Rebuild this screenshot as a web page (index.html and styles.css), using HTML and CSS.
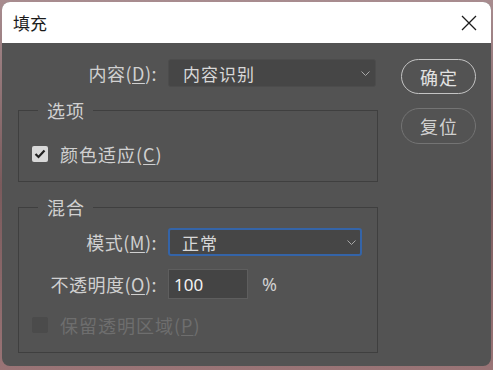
FILE: index.html
```html
<!DOCTYPE html>
<html lang="zh-CN">
<head>
<meta charset="utf-8">
<title>填充</title>
<link rel="stylesheet" href="styles.css">
</head>
<body>
<div class="dialog">
  <div class="titlebar">
    <span class="title">填充</span>
    <button class="close" aria-label="关闭">
      <svg width="16" height="16" viewBox="0 0 16 16"><path d="M1 1 L15 15 M15 1 L1 15" stroke="#1c1c1c" stroke-width="1.3" fill="none"/></svg>
    </button>
  </div>
  <div class="content">
    <div class="main">
      <div class="row top-row">
        <span class="lbl lbl-top">内容(<u>D</u>):</span>
        <div class="select select-wide">
          <span>内容识别</span>
          <svg class="chev" width="9" height="5" viewBox="0 0 9 5"><path d="M0.5 0.5 L4.5 4.5 L8.5 0.5" stroke="#a8a8a8" stroke-width="1" fill="none"/></svg>
        </div>
      </div>
      <fieldset class="group group-options">
        <legend>选项</legend>
        <div class="check-row first-check">
          <span class="checkbox checked">
            <svg width="12" height="10" viewBox="0 0 12 10"><path d="M1.5 5 L4.5 8 L10.5 1.5" stroke="#222" stroke-width="2.2" fill="none"/></svg>
          </span>
          <span class="check-label">颜色适应(<u>C</u>)</span>
        </div>
      </fieldset>
      <fieldset class="group group-blend">
        <legend>混合</legend>
        <div class="row mode-row">
          <span class="lbl">模式(<u>M</u>):</span>
          <div class="select select-mode">
            <span>正常</span>
            <svg class="chev" width="9" height="5" viewBox="0 0 9 5"><path d="M0.5 0.5 L4.5 4.5 L8.5 0.5" stroke="#a8a8a8" stroke-width="1" fill="none"/></svg>
          </div>
        </div>
        <div class="row opacity-row">
          <span class="lbl">不透明度(<u>O</u>):</span>
          <div class="num">100</div>
          <span class="unit">%</span>
        </div>
        <div class="check-row disabled">
          <span class="checkbox"></span>
          <span class="check-label">保留透明区域(<u>P</u>)</span>
        </div>
      </fieldset>
    </div>
    <div class="buttons">
      <button class="btn primary">确定</button>
      <button class="btn">复位</button>
    </div>
  </div>
</div>
</body>
</html>
```

FILE: styles.css
```css
* { box-sizing: border-box; }
html, body { margin: 0; }
body {
  width: 493px;
  height: 370px;
  padding: 2px 2px 4px 2px;
  overflow: hidden;
  background: linear-gradient(180deg, #a88c8f 0%, #7a5a5c 50%, #9a7476 100%);
  font-family: "Noto Sans CJK SC", "Noto Sans", sans-serif;
}
.dialog {
  width: 489px;
  height: 364px;
  border-radius: 8px;
  overflow: hidden;
  background: #535353;
  display: flex;
  flex-direction: column;
}
.titlebar {
  height: 41px;
  flex: none;
  background: #ffffff;
  display: flex;
  align-items: center;
  justify-content: space-between;
  padding: 0 14px 0 11px;
}
.title {
  font-size: 17px;
  line-height: 20px;
  color: #1b1b1b;
}
.close {
  border: 0;
  background: none;
  padding: 0;
  width: 16px;
  height: 16px;
  display: flex;
}
.content {
  flex: 1;
  display: grid;
  grid-template-columns: 360px 75px;
  column-gap: 23px;
  align-items: start;
  padding: 16px 0 0 16px;
}
.main { display: flex; flex-direction: column; }
.row { display: flex; align-items: center; }
.top-row { height: 28px; }
.lbl {
  width: 138px;
  margin-right: 10px;
  text-align: right;
  white-space: nowrap;
  font-size: 18px;
  letter-spacing: 0.5px;
  line-height: 20px;
  color: #d0d0d0;
}
.lbl-top { width: 139px; }
u { text-decoration-thickness: 1px; text-underline-offset: 2px; }
.select {
  height: 28px;
  background: #464646;
  border: 1px solid #4c4c4c;
  border-radius: 3px;
  display: flex;
  align-items: center;
  justify-content: space-between;
  padding: 0 5px 0 14px;
  font-size: 17px;
  letter-spacing: 1px;
  color: #d8d8d8;
}
.select-wide { width: 208px; margin-left: 1px; }
.select-mode {
  width: 194px;
  border: 2px solid #3464a8;
  padding: 0 4px 0 12px;
  margin-left: 1px;
}
.chev { display: block; }
.group {
  margin: 13px 0 0;
  padding: 0 0 15px 0;
  border: 1px solid #3f3f3f;
  min-width: 0;
  width: 360px;
}
.group-blend { margin-top: 15px; }
legend {
  margin-left: 19px;
  padding: 0 8px 0 9px;
  font-size: 18px;
  letter-spacing: 1px;
  line-height: 20px;
  color: #d0d0d0;
}
.check-row {
  height: 24px;
  display: flex;
  align-items: center;
  margin-left: 13px;
}
.first-check { margin-top: 22px; }
.checkbox {
  width: 16px;
  height: 16px;
  border-radius: 2px;
  background: #4b4b4b;
  display: flex;
  align-items: center;
  justify-content: center;
  margin-right: 12px;
}
.checkbox.checked { background: #d9d9d9; }
.check-label {
  font-size: 18px;
  letter-spacing: 1px;
  line-height: 20px;
  color: #d0d0d0;
}
.disabled { margin-top: 14px; }
.disabled .check-label { color: #6e6e6e; }
.mode-row { margin-top: 11px; height: 28px; }
.opacity-row { margin-top: 13px; height: 30px; }
.num {
  width: 80px;
  height: 30px;
  margin-left: 1px;
  background: #444444;
  border: 1px solid #5e5e5e;
  padding-left: 5px;
  display: flex;
  align-items: center;
  font-family: "Noto Sans", sans-serif;
  font-size: 17px;
  color: #f2f2f2;
}
.unit {
  margin-left: 14px;
  font-family: "Noto Sans", sans-serif;
  font-size: 18px;
  color: #d0d0d0;
}
.buttons {
  display: flex;
  flex-direction: column;
  gap: 14px;
}
.btn {
  width: 75px;
  height: 35px;
  border-radius: 18px;
  border: 1px solid #747474;
  background: transparent;
  font-family: "Noto Sans CJK SC", sans-serif;
  font-size: 18px;
  letter-spacing: 1px;
  text-indent: 1px;
  color: #d0d0d0;
  padding: 0;
}
.btn.primary {
  border: 1.5px solid #c4c4c4;
  color: #e2e2e2;
}
.btn + .btn { height: 36px; }
```
